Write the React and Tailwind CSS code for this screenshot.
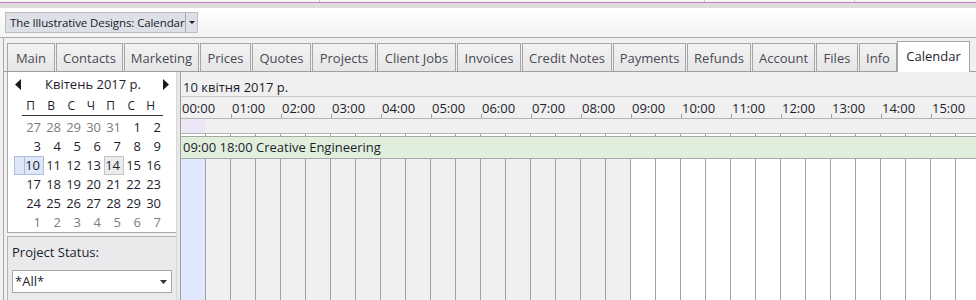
import React from "react";

const tabs = [
  { name: "Main", w: 48 },
  { name: "Contacts", w: 67 },
  { name: "Marketing", w: 75 },
  { name: "Prices", w: 51 },
  { name: "Quotes", w: 59 },
  { name: "Projects", w: 64 },
  { name: "Client Jobs", w: 79 },
  { name: "Invoices", w: 64 },
  { name: "Credit Notes", w: 90 },
  { name: "Payments", w: 73 },
  { name: "Refunds", w: 64 },
  { name: "Account", w: 63 },
  { name: "Files", w: 42 },
  { name: "Info", w: 38 },
];

const weekDays = ["П", "В", "С", "Ч", "П", "С", "Н"];

// [day, isOtherMonth]
const weeks = [
  [[27, 1], [28, 1], [29, 1], [30, 1], [31, 1], [1, 0], [2, 0]],
  [[3, 0], [4, 0], [5, 0], [6, 0], [7, 0], [8, 0], [9, 0]],
  [[10, 0], [11, 0], [12, 0], [13, 0], [14, 0], [15, 0], [16, 0]],
  [[17, 0], [18, 0], [19, 0], [20, 0], [21, 0], [22, 0], [23, 0]],
  [[24, 0], [25, 0], [26, 0], [27, 0], [28, 0], [29, 0], [30, 0]],
  [[1, 1], [2, 1], [3, 1], [4, 1], [5, 1], [6, 1], [7, 1]],
];

const hours = Array.from({ length: 16 }, (_, i) => String(i).padStart(2, "0") + ":00");
const cols = Array.from({ length: 33 }, (_, i) => i);

const MiniCalendar = () => (
  <div className="h-[161px] bg-white border-l border-b border-[#a8a8a8] flex flex-col">
    {/* month header */}
    <div className="h-[27px] flex items-center justify-between px-[7px] text-[13px] text-[#1e1e2e]">
      <svg width="7" height="11" viewBox="0 0 7 11"><path d="M6 0 L0 5.5 L6 11 Z" fill="#1a1a1a" /></svg>
      <span className="pl-[2px]">Квітень 2017 р.</span>
      <svg width="7" height="11" viewBox="0 0 7 11"><path d="M1 0 L7 5.5 L1 11 Z" fill="#1a1a1a" /></svg>
    </div>
    <div className="ml-[14px] w-[141px] flex border-b border-[#333] h-[19px] items-center text-[12px] text-[#1e1e2e]">
      {weekDays.map((d, i) => (
        <div key={i} className="w-[20px] text-right pr-[3px] first:w-[16px]">{d}</div>
      ))}
    </div>
    <div className="mt-[2px]">
      {weeks.map((wk, r) => (
        <div key={r} className="flex h-[19px] items-center text-[13px]">
          <div className={`w-[10px] h-[19px] ml-[6px] ${r === 2 ? "bg-[#dde6f6] border border-[#aabfe3] border-r-0" : ""}`} />
          {wk.map(([d, other], c) => {
            let cls = "w-[20px] h-[19px] flex items-center justify-end pr-[3px] ";
            if (r === 2 && c === 0) cls += "bg-[#dde6f6] border border-[#aabfe3] ";
            if (r === 2 && c === 4) cls += "bg-[#ebebeb] border border-[#c4c4c4] ";
            cls += other ? "text-[#7c7c7c]" : "text-[#1e1e2e]";
            return (
              <div key={c} className={cls}>{d}</div>
            );
          })}
        </div>
      ))}
    </div>
  </div>
);

const Scheduler = () => (
  <div className="flex-1 flex flex-col border-l border-[#a0a0a0] overflow-hidden">
    <div className="h-[25px] shrink-0 bg-[#f0f0f0] border-b border-[#c8c8c8] pt-[6px] pl-[2px] text-[13px] leading-[18px] text-[#1e1e2e] whitespace-nowrap">
      10 квітня 2017 р.
    </div>
    <div className="h-[22px] shrink-0 bg-[#f0f0f0] border-b border-[#b4b4b4] flex text-[13px] text-[#1e1e2e]">
      {hours.map((h, i) => (
        <div key={h} className="w-[50px] shrink-0 relative pl-[1px] pt-[2px] leading-[18px]">
          {i > 0 && <div className="absolute left-0 bottom-0 w-px h-[4px] bg-[#a0a0a0]" />}
          {h}
        </div>
      ))}
    </div>
    <div className="h-[14px] shrink-0 bg-[#f0f0f0] flex">
      <div className="w-[24px] shrink-0 bg-[#ece6f6]" />
    </div>
    <div className="h-[3px] shrink-0 flex border-t border-[#b4b4b4] bg-white">
      {cols.map((i) => (
        <div key={i} className="w-[25px] shrink-0 border-r border-[#a0a0a0]" />
      ))}
    </div>
    <div className="h-[23px] shrink-0 bg-[#e0eedc] border-y border-[#a8a8a8] flex items-center pl-[2px] text-[13px] text-[#1e1e2e] whitespace-nowrap">
      09:00 18:00 Creative Engineering
    </div>
    <div className="flex-1 flex">
      {cols.map((i) => (
        <div
          key={i}
          className={`w-[25px] shrink-0 border-r border-[#a0a0a0] ${i === 0 ? "bg-[#dfe8fc]" : i < 18 ? "bg-[#f0f0f0]" : "bg-white"}`}
        />
      ))}
    </div>
  </div>
);

export default function App() {
  return (
    <div className="w-[976px] h-[300px] overflow-hidden bg-[#f0f0f0] flex flex-col" style={{ fontFamily: '"Open Sans", "Noto Sans", sans-serif' }}>
      {/* window top strip */}
      <div className="h-[2px] shrink-0 bg-[#f7f7f7] flex">
        <div className="w-[320px] border-r border-[#c8c8c8]" />
        <div className="w-[385px] border-r border-[#c8c8c8]" />
        <div className="w-[150px] border-r border-[#c8c8c8]" />
      </div>
      <div className="h-px shrink-0 bg-[#c47cc4]" />
      <div className="h-[5px] shrink-0 bg-[#dcdcdc]" />
      <div className="h-[30px] shrink-0 bg-gradient-to-b from-white to-[#f3f3f3] pl-[5px] pt-[4px] border-b border-[#acacac]">
        <div className="w-[193px] h-[21px] flex border border-[#bdbdbd] bg-[#dde0e6]">
          <div className="flex-1 flex items-center pl-[4px] text-[11.5px] tracking-[-0.1px] text-[#1a1a2a] whitespace-nowrap overflow-hidden">
            The Illustrative Designs: Calendar
          </div>
          <div className="w-[12px] border-l border-[#a8a8a8] flex items-center justify-center">
            <svg width="6" height="3" viewBox="0 0 6 3"><path d="M0 0 H6 L3 3 Z" fill="#222" /></svg>
          </div>
        </div>
      </div>

      {/* tabs */}
      <div className="h-[34px] shrink-0 flex items-end pl-[3px]">
        <div className="flex-1 flex items-end h-[34px] border-l border-[#a8a8a8]">
          <div className="w-[3px] h-[34px] border-b border-[#a0a0a0]" />
          <div className="flex items-end border-b border-[#a0a0a0] h-[34px] gap-px">
            {tabs.map((t) => (
              <div
                key={t.name}
                style={{ width: t.w }}
                className="h-[28px] shrink-0 border border-b-0 border-[#a6a6a6] bg-gradient-to-b from-[#f3f3f3] to-[#e6e6e6] flex items-center justify-center pt-[2px] text-[13px] text-[#4a4a55] whitespace-nowrap"
              >
                {t.name}
              </div>
            ))}
          </div>
          <div className="w-[73px] h-[31px] shrink-0 border border-b-0 border-[#a6a6a6] bg-white flex items-center justify-center text-[13px] text-[#1e1e2e] pb-[1px]">
            Calendar
          </div>
          <div className="flex-1 h-[34px] border-b border-[#a0a0a0]" />
        </div>
      </div>

      {/* body */}
      <div className="flex-1 flex ml-[3px] border-l border-[#a8a8a8] pl-[3px] overflow-hidden">
        <div className="w-[169px] shrink-0 flex flex-col">
          <MiniCalendar />
          <div className="mt-[3px] flex-1 bg-[#eaeaec] border-l border-t border-[#b4b4b4] px-[4px]">
            <div className="text-[13px] text-[#1e1e2e] mt-[6px] h-[20px]">Project Status:</div>
            <div className="mt-[7px] h-[23px] bg-white border border-[#a8a8a8] flex items-center justify-between pl-[2px] pr-[4px] text-[13px] text-[#1e1e2e]">
              <span>*All*</span>
              <svg width="7" height="4" viewBox="0 0 7 4"><path d="M0 0 H7 L3.5 4 Z" fill="#333" /></svg>
            </div>
          </div>
        </div>
        <div className="w-[4px] shrink-0 border-l border-[#d8d8d8] bg-[#e8e8e8]" />
        <Scheduler />
      </div>
    </div>
  );
}
